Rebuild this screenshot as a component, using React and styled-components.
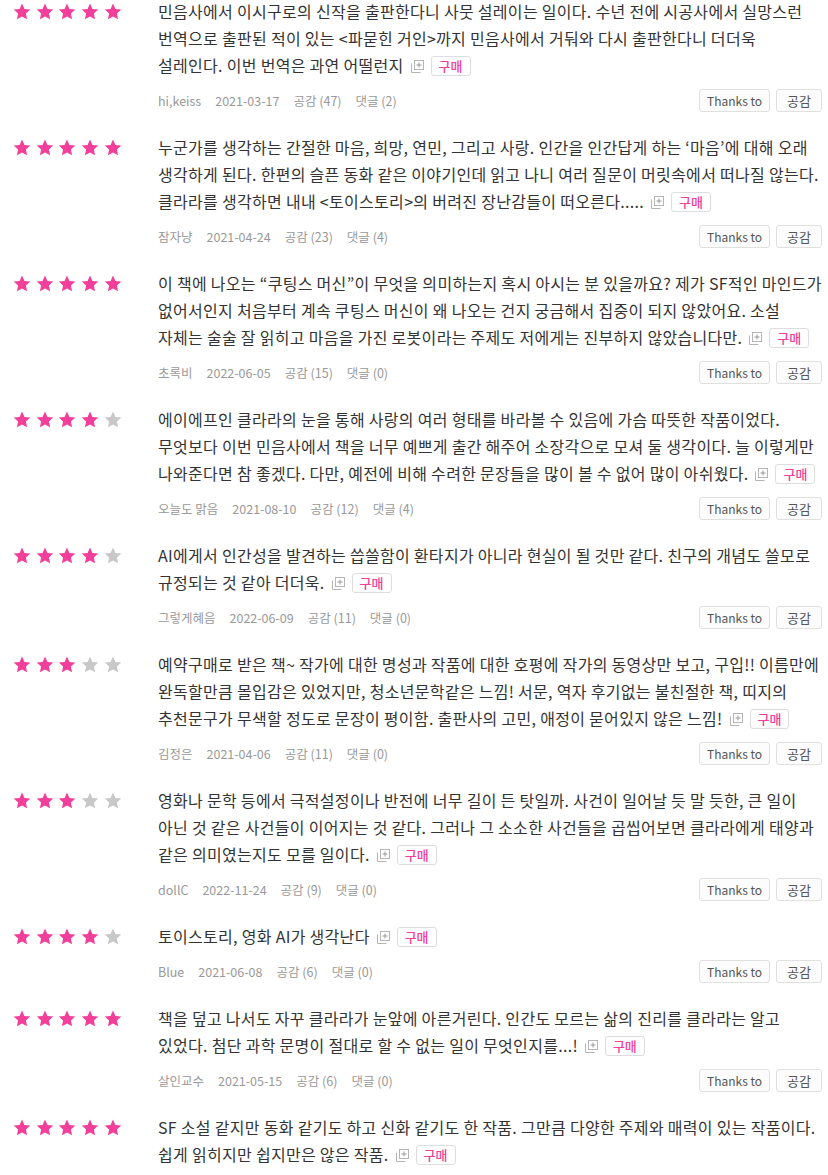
import React from 'react';
import styled, { createGlobalStyle } from 'styled-components';

const GlobalStyle = createGlobalStyle`
  body {
    margin: 0;
    background: #fff;
    font-family: "Noto Sans CJK KR", "Noto Sans", sans-serif;
    color: #333;
  }
`;

const reviews = [
  {
    stars: 5,
    lines: [
      '민음사에서 이시구로의 신작을 출판한다니 사뭇 설레이는 일이다. 수년 전에 시공사에서 실망스런',
      '번역으로 출판된 적이 있는 <파묻힌 거인>까지 민음사에서 거둬와 다시 출판한다니 더더욱',
      '설레인다. 이번 번역은 과연 어떨런지',
    ],
    user: 'hi,keiss', date: '2021-03-17', likes: 47, comments: 2,
  },
  {
    stars: 5,
    lines: [
      '누군가를 생각하는 간절한 마음, 희망, 연민, 그리고 사랑. 인간을 인간답게 하는 ‘마음’에 대해 오래',
      '생각하게 된다. 한편의 슬픈 동화 같은 이야기인데 읽고 나니 여러 질문이 머릿속에서 떠나질 않는다.',
      '클라라를 생각하면 내내 <토이스토리>의 버려진 장난감들이 떠오른다.....',
    ],
    user: '잠자냥', date: '2021-04-24', likes: 23, comments: 4,
  },
  {
    stars: 5,
    lines: [
      '이 책에 나오는 “쿠팅스 머신”이 무엇을 의미하는지 혹시 아시는 분 있을까요? 제가 SF적인 마인드가',
      '없어서인지 처음부터 계속 쿠팅스 머신이 왜 나오는 건지 궁금해서 집중이 되지 않았어요. 소설',
      '자체는 술술 잘 읽히고 마음을 가진 로봇이라는 주제도 저에게는 진부하지 않았습니다만.',
    ],
    user: '초록비', date: '2022-06-05', likes: 15, comments: 0,
  },
  {
    stars: 4,
    lines: [
      '에이에프인 클라라의 눈을 통해 사랑의 여러 형태를 바라볼 수 있음에 가슴 따뜻한 작품이었다.',
      '무엇보다 이번 민음사에서 책을 너무 예쁘게 출간 해주어 소장각으로 모셔 둘 생각이다. 늘 이렇게만',
      '나와준다면 참 좋겠다. 다만, 예전에 비해 수려한 문장들을 많이 볼 수 없어 많이 아쉬웠다.',
    ],
    user: '오늘도 맑음', date: '2021-08-10', likes: 12, comments: 4,
  },
  {
    stars: 4,
    lines: [
      'AI에게서 인간성을 발견하는 씁쓸함이 환타지가 아니라 현실이 될 것만 같다. 친구의 개념도 쓸모로',
      '규정되는 것 같아 더더욱.',
    ],
    user: '그렇게혜음', date: '2022-06-09', likes: 11, comments: 0,
  },
  {
    stars: 3,
    lines: [
      '예약구매로 받은 책~ 작가에 대한 명성과 작품에 대한 호평에 작가의 동영상만 보고, 구입!! 이름만에',
      '완독할만큼 몰입감은 있었지만, 청소년문학같은 느낌! 서문, 역자 후기없는 불친절한 책, 띠지의',
      '추천문구가 무색할 정도로 문장이 평이함. 출판사의 고민, 애정이 묻어있지 않은 느낌!',
    ],
    user: '김정은', date: '2021-04-06', likes: 11, comments: 0,
  },
  {
    stars: 3,
    lines: [
      '영화나 문학 등에서 극적설정이나 반전에 너무 길이 든 탓일까. 사건이 일어날 듯 말 듯한, 큰 일이',
      '아닌 것 같은 사건들이 이어지는 것 같다. 그러나 그 소소한 사건들을 곱씹어보면 클라라에게 태양과',
      '같은 의미였는지도 모를 일이다.',
    ],
    user: 'dollC', date: '2022-11-24', likes: 9, comments: 0,
  },
  {
    stars: 4,
    lines: ['토이스토리, 영화 AI가 생각난다'],
    user: 'Blue', date: '2021-06-08', likes: 6, comments: 0,
  },
  {
    stars: 5,
    lines: [
      '책을 덮고 나서도 자꾸 클라라가 눈앞에 아른거린다. 인간도 모르는 삶의 진리를 클라라는 알고',
      '있었다. 첨단 과학 문명이 절대로 할 수 없는 일이 무엇인지를...!',
    ],
    user: '살인교수', date: '2021-05-15', likes: 6, comments: 0,
  },
  {
    stars: 5,
    lines: [
      'SF 소설 같지만 동화 같기도 하고 신화 같기도 한 작품. 그만큼 다양한 주제와 매력이 있는 작품이다.',
      '쉽게 읽히지만 쉽지만은 않은 작품.',
    ],
    user: null,
  },
];

const List = styled.div`
  margin-top: -12px;
`;

const Row = styled.div`
  display: grid;
  grid-template-columns: 145px 1fr;
  padding: 10px 6px 12px 13px;
`;

const Stars = styled.div`
  display: flex;
  align-items: center;
  gap: 4.7px;
  height: 27px;
`;

const Body = styled.div`
  min-width: 0;
`;

const Line = styled.div`
  font-size: 16px;
  line-height: 27px;
  letter-spacing: 0.3px;
  color: #333;
  white-space: nowrap;
`;

const MoreIcon = styled.svg`
  display: inline-block;
  vertical-align: middle;
  margin: -3px 0 0 7px;
`;

const BuyTag = styled.span`
  display: inline-flex;
  align-items: center;
  vertical-align: middle;
  height: 18px;
  padding: 0 7px;
  margin: -3px 0 0 7px;
  border: 1px solid #ddd;
  border-radius: 3px;
  background: #fff;
  color: #f0409a;
  font-size: 13px;
  font-weight: 500;
  letter-spacing: 0;
  line-height: 18px;
`;

const Meta = styled.div`
  display: flex;
  align-items: center;
  justify-content: space-between;
  height: 23px;
  margin-top: 10px;
`;

const Info = styled.div`
  display: flex;
  gap: 14px;
  font-size: 12.5px;
  color: #999;
`;

const Actions = styled.div`
  display: flex;
  gap: 6px;
`;

const Button = styled.button`
  height: 23px;
  padding: 0 ${(p) => (p.$wide ? 7 : 10)}px;
  border: 1px solid #e0e0e0;
  border-radius: 3px;
  background: #fcfcfc;
  color: #555;
  font-family: inherit;
  font-size: ${(p) => (p.$wide ? 12 : 13)}px;
  line-height: 21px;
`;

const Star = ({ on }) => (
  <svg width="18" height="17" viewBox="0 0 24 23">
    <path
      d="M12 0.8l3.3 7.2 7.9 0.9-5.9 5.4 1.6 7.8L12 18.2l-6.9 3.9 1.6-7.8L0.8 8.9l7.9-0.9z"
      fill={on ? '#f2409a' : '#c8c8c8'}
    />
  </svg>
);

const More = () => (
  <MoreIcon width="13" height="13" viewBox="0 0 13 13">
    <path d="M0.5 3.5v9h9" fill="none" stroke="#b5b5b5" />
    <rect x="3.5" y="0.5" width="9" height="9" fill="#fff" stroke="#b5b5b5" />
    <path d="M8 2.5v5M5.5 5h5" stroke="#999" />
  </MoreIcon>
);

const Review = ({ r }) => (
  <Row>
    <Stars>
      {[0, 1, 2, 3, 4].map((i) => (
        <Star key={i} on={i < r.stars} />
      ))}
    </Stars>
    <Body>
      {r.lines.map((l, i) => (
        <Line key={i}>
          {l}
          {i === r.lines.length - 1 && (
            <>
              <More />
              <BuyTag>구매</BuyTag>
            </>
          )}
        </Line>
      ))}
      {r.user && (
        <Meta>
          <Info>
            <span>{r.user}</span>
            <span>{r.date}</span>
            <span>공감 ({r.likes})</span>
            <span>댓글 ({r.comments})</span>
          </Info>
          <Actions>
            <Button $wide>Thanks to</Button>
            <Button>공감</Button>
          </Actions>
        </Meta>
      )}
    </Body>
  </Row>
);

export default function App() {
  return (
    <>
      <GlobalStyle />
      <List>
        {reviews.map((r, i) => (
          <Review key={i} r={r} />
        ))}
      </List>
    </>
  );
}
